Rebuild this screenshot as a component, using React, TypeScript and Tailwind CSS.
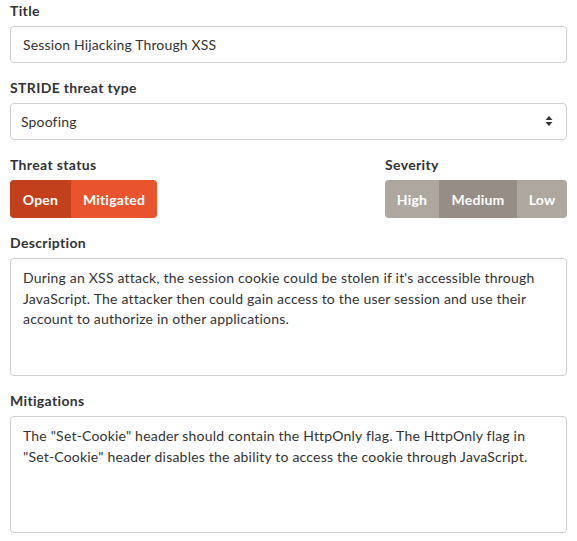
import React from "react";

const font = { fontFamily: "Lato, 'Open Sans', sans-serif" };

function Label({ children }: { children: React.ReactNode }) {
  return (
    <div className="h-5 leading-5 mb-[5px] text-[14px] font-bold tracking-[0.35px] text-[#333]">{children}</div>
  );
}

export default function App() {
  return (
    <div className="bg-white px-[10px] pt-px text-[#333]" style={font}>
      <div className="mb-[15px]">
        <Label>Title</Label>
        <input
          readOnly
          value="Session Hijacking Through XSS"
          className="w-full h-[37px] border border-[#cfcfcf] rounded-[4px] px-3 text-[14px] tracking-[0.15px] text-[#333] outline-none"
        />
      </div>
      <div className="mb-[15px]">
        <Label>STRIDE threat type</Label>
        <div className="relative">
          <select className="w-full h-[37px] border border-[#cfcfcf] rounded-[4px] pl-[10px] pr-8 text-[14px] tracking-[0.15px] text-[#333] bg-white appearance-none outline-none">
            <option>Spoofing</option>
          </select>
          <svg className="absolute right-[14px] top-[12px]" width="8" height="12" viewBox="0 0 8 12">
            <path d="M4 1 L7.5 5 L0.5 5 Z" fill="#333" />
            <path d="M4 11 L7.5 7 L0.5 7 Z" fill="#333" />
          </svg>
        </div>
      </div>
      <div className="grid grid-cols-[1fr_182px] mb-[15px]">
        <div>
          <Label>Threat status</Label>
          <div className="flex">
            <div className="h-[38px] w-[61px] flex items-center justify-center bg-[#c2411c] text-white text-[14px] font-bold tracking-[0.2px] rounded-l-[4px]">
              Open
            </div>
            <div className="h-[38px] w-[86px] flex items-center justify-center bg-[#e9532e] text-white text-[14px] font-bold tracking-[0.2px] rounded-r-[4px]">
              Mitigated
            </div>
          </div>
        </div>
        <div>
          <Label>Severity</Label>
          <div className="flex">
            <div className="h-[38px] w-[54px] flex items-center justify-center bg-[#aea79f] text-white text-[14px] font-bold tracking-[0.2px] rounded-l-[4px]">
              High
            </div>
            <div className="h-[38px] w-[78px] flex items-center justify-center bg-[#968e86] text-white text-[14px] font-bold tracking-[0.2px]">
              Medium
            </div>
            <div className="h-[38px] w-[50px] flex items-center justify-center bg-[#aea79f] text-white text-[14px] font-bold tracking-[0.2px] rounded-r-[4px]">
              Low
            </div>
          </div>
        </div>
      </div>
      <div className="mb-[15px]">
        <Label>Description</Label>
        <div className="h-[118px] border border-[#cfcfcf] rounded-[4px] px-3 pt-[9px] text-[14px] leading-[20.5px] tracking-[0.2px] text-[#333]">
          During an XSS attack, the session cookie could be stolen if it's accessible through JavaScript. The attacker then could gain access to the user session and use their account to authorize in other applications.
        </div>
      </div>
      <div>
        <Label>Mitigations</Label>
        <div className="h-[117px] border border-[#cfcfcf] rounded-[4px] px-3 pt-[9px] text-[14px] leading-[20.5px] tracking-[0.2px] text-[#333]">
          The "Set-Cookie" header should contain the HttpOnly flag. The HttpOnly flag in{" "}
          <span className="whitespace-nowrap">"Set-Cookie"</span> header disables the ability to access the cookie through JavaScript.
        </div>
      </div>
    </div>
  );
}
